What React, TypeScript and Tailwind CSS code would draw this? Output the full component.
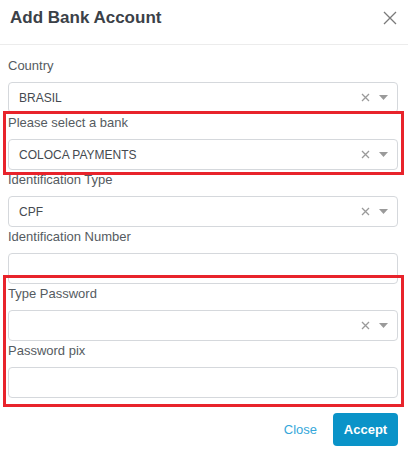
function Field({ label, value, select }: { label: string; value?: string; select?: boolean }) {
  return (
    <div>
      <div className="h-[20px] leading-[20px] text-[13px] text-[#555b61] mb-[6px]">{label}</div>
      <div className="h-[31px] border border-[#d5d8dc] rounded-[4px] flex items-center pl-[10px] pr-[9px]">
        <span className="flex-1 text-[12px] text-[#454a50]">{value}</span>
        {select && (
          <div className="flex items-center gap-[9px]">
            <svg width="9" height="9" viewBox="0 0 9 9" stroke="#9a9a9a" strokeWidth="1.3">
              <path d="M1 1l7 7M8 1l-7 7" />
            </svg>
            <svg width="9" height="5" viewBox="0 0 9 5" fill="#9a9a9a">
              <path d="M0 0h9L4.5 5z" />
            </svg>
          </div>
        )}
      </div>
    </div>
  )
}

export default function App() {
  return (
    <div className="relative w-[408px] h-[452px] bg-white overflow-hidden" style={{ fontFamily: '"Liberation Sans", Arial, sans-serif' }}>
      <div className="h-[45px] border-b border-[#ececec] flex items-start justify-between pt-[7px] pl-[10px] pr-[10px]">
        <h1 className="text-[17px] leading-[22px] font-bold text-[#3b4148]">Add Bank Account</h1>
        <svg width="14" height="14" viewBox="0 0 14 14" stroke="#7a7a7a" strokeWidth="1.3" className="mt-[4px] mr-[1px]">
          <path d="M1 1l12 12M13 1L1 13" />
        </svg>
      </div>

      <div className="pl-[8px] pr-[10px] pt-[11px]">
        <Field label="Country" value="BRASIL" select />
        <Field label="Please select a bank" value="COLOCA PAYMENTS" select />
        <Field label="Identification Type" value="CPF" select />
        <Field label="Identification Number" />
        <Field label="Type Password" select />
        <Field label="Password pix" />
      </div>

      <div className="flex justify-end items-center gap-[16px] pr-[10px] mt-[15px]">
        <button className="text-[13px] text-[#35a7da]">Close</button>
        <button className="w-[65px] h-[33px] rounded-[4px] bg-[#0a93c8] text-white text-[13px] font-bold">Accept</button>
      </div>

      <div className="absolute left-[3px] top-[111px] w-[401px] h-[64px] border-[3px] border-[#e8232b]" />
      <div className="absolute left-[3px] top-[275px] w-[401px] h-[132px] border-[3px] border-[#e8232b]" />
    </div>
  )
}
